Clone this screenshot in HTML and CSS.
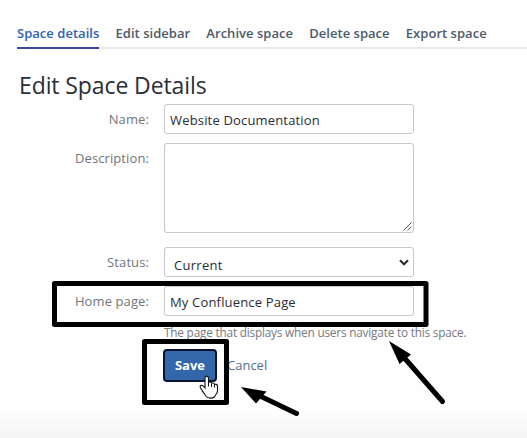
FILE: index.html
```html
<!DOCTYPE html>
<html lang="en">
<head>
<meta charset="utf-8">
<title>Edit Space Details</title>
<link rel="stylesheet" href="styles.css">
</head>
<body>
<nav class="tabs">
  <a class="tab active">Space details</a>
  <a class="tab">Edit sidebar</a>
  <a class="tab">Archive space</a>
  <a class="tab">Delete space</a>
  <a class="tab">Export space</a>
</nav>
<main>
  <h1>Edit Space Details</h1>
  <form class="form">
    <label class="label">Name:</label>
    <div class="field"><span>Website Documentation</span></div>
    <label class="label">Description:</label>
    <div class="field area">
      <svg viewBox="0 0 9 9" width="9" height="9"><path d="M.5 8.5 8.5.5M4.5 8.5 8.5 4.5" fill="none" stroke="#555" stroke-width="1"/></svg>
    </div>
    <label class="label">Status:</label>
    <div class="field select"><span>Current</span>
      <svg viewBox="0 0 10 7" width="10" height="7"><path d="m1 1.200 4 4 4-4" fill="none" stroke="#303236" stroke-width="2.200"/></svg>
    </div>
    <label class="label">Home page:</label>
    <div class="field"><span>My Confluence Page</span></div>
    <p class="help">The page that displays when users navigate to this space.</p>
    <div class="actions"><button type="button" class="save">Save</button><a class="cancel">Cancel</a></div>
  </form>
</main>
<svg class="annotations" viewBox="0 0 527 438" width="527" height="438">
  <g fill="none" stroke="#000" stroke-width="5" stroke-linejoin="round">
    <rect x="54.500" y="283.500" width="371.500" height="41"/>
    <rect x="144.500" y="341.500" width="82" height="61"/>
  </g>
  <g stroke="#000" stroke-width="5" stroke-linecap="round">
    <path d="M259 395.500 296.500 413.500M404 357.500 442.500 401.500"/>
  </g>
  <path d="m241 387 25.500 4.500-10.500 12ZM389 341l22 13.500L399.500 364Z"/>
  <path d="M205 378.500c0-3.200 3.500-3.200 3.500 0v4.300c.4-1.300 3-.9 3 .8.500-1.100 3-.7 3 1 .8-.8 3-.3 3 1.500v4.600c0 3-2 3.500-2.500 5.300-1 2.500-7 3-9 .2-1.200-2.200-3.500-4.400-4.400-6.700-.9-1.300-2-2.300-1.400-3.500.9-1.500 3.200-.3 4.800 1.800Z" fill="#fff" stroke="#111" stroke-width="1.100"/>
  <path d="M208.500 382.500v4M211.500 383.500v3.500M214.500 384.500v3" stroke="#111" fill="none"/>
</svg>
</body>
</html>
```
FILE: styles.css
```css
* { box-sizing: border-box; }
body { margin: 0; height: 438px; overflow: hidden; font: 13px/18px "Open Sans", "Noto Sans", sans-serif; color: #292d33; background: linear-gradient(#fefefe 0 408px, #f5f5f5 438px); }
.tabs { display: flex; height: 49px; margin-left: 17px; padding-top: 24px; border-bottom: 2px solid #e9eaeb; gap: 16.2px; }
.tab { height: 25px; white-space: nowrap; font-weight: 600; color: #4c5a69; letter-spacing: .03px; }
.active { color: #2e60b6; border-bottom: 2px solid #39489a; }
h1 { margin: 18px 0 0 19px; height: 37px; font-size: 23px; line-height: 36px; font-weight: 400; letter-spacing: -.1px; color: #2b2f36; }
.form { display: grid; grid-template-columns: 149px 250px; gap: 9px 15px; grid-template-rows: 30px 95px 30px 30px 22px 36px; }
.label { text-align: right; padding-top: 6px; color: #72767b; letter-spacing: .1px; }
.field { border: 1px solid #c5c8cc; border-radius: 3px; background: #fff; padding: 6px 5px; white-space: nowrap; letter-spacing: .17px; }
.area { display: flex; height: 90px; justify-content: flex-end; align-items: flex-end; padding: 1px; }
.select { display: flex; justify-content: space-between; padding: 8px 4px 4px 9px; letter-spacing: .3px; }
.select svg { margin-top: 3px; }
.help { grid-column: 2; margin: -2px 0 0; font-size: 11.8px; white-space: nowrap; color: #777a7e; letter-spacing: -.2px; }
.actions { grid-column: 2; display: flex; align-items: center; height: 32px; margin: -7px 0 0 -1px; gap: 10px; }
.save { width: 54px; height: 33px; border: 2px solid #06152d; border-radius: 4px; background: #3268aa; color: #fff; font: 700 13px/18px "Open Sans", sans-serif; padding: 0; }
.cancel { color: #547087; }
.annotations { position: absolute; top: 0; left: 0; pointer-events: none; }
```
